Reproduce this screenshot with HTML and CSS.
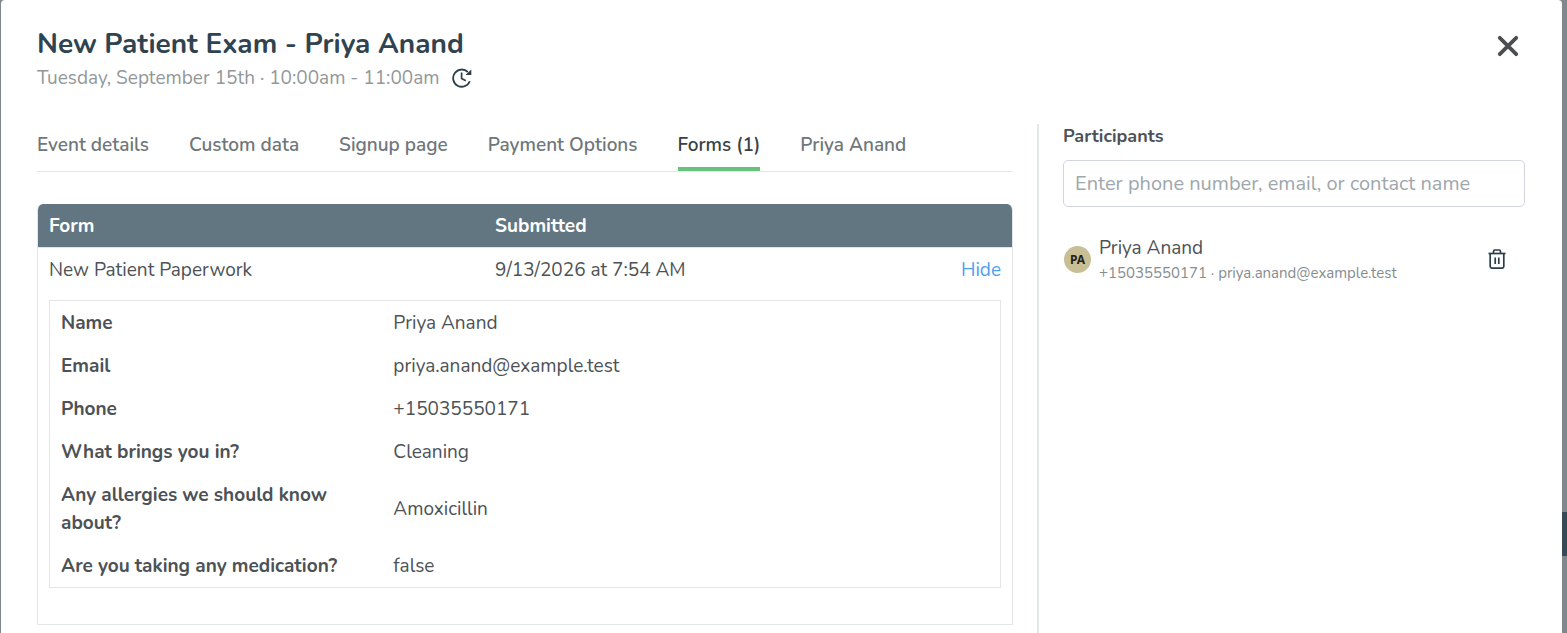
FILE: index.html
```html
<!DOCTYPE html>
<html lang="en">
<head>
  <meta charset="UTF-8">
  <meta name="viewport" content="width=device-width, initial-scale=1">
  <title>New Patient Exam - Priya Anand</title>
  <link rel="stylesheet" href="styles.css">
</head>
<body>

  <div class="page-behind"></div>

  <div class="dialog" role="dialog" aria-labelledby="dialogTitle">
    <header class="dialog-header">
      <div>
        <h1 id="dialogTitle">New Patient Exam - Priya Anand</h1>
        <div class="event-time">
          <span>Tuesday, September 15th · 10:00am - 11:00am</span>
          <button class="icon-btn" type="button" aria-label="Reschedule">
            <svg width="20" height="20" viewBox="0 0 20 20" fill="none" stroke="currentColor" stroke-width="1.8">
              <path d="M17.8 13.2A8.6 8.6 0 1 1 15.8 4"/>
              <path d="M9.6 4.6v6l4.2 2.2" stroke-width="1.7"/>
              <path d="M19.3 1.4v5.6h-5.8z" fill="currentColor" stroke="none"/>
            </svg>
          </button>
        </div>
      </div>
      <button class="icon-btn close-btn" type="button" aria-label="Close">
        <svg width="22" height="22" viewBox="0 0 22 22" fill="none" stroke="currentColor" stroke-width="3.8" stroke-linecap="round">
          <path d="M2.8 2.8l16.4 16.4M19.2 2.8L2.8 19.2"/>
        </svg>
      </button>
    </header>

    <div class="dialog-body">
      <main>
        <nav class="tabs">
          <a href="#details">Event details</a>
          <a href="#custom">Custom data</a>
          <a href="#signup">Signup page</a>
          <a href="#payment">Payment Options</a>
          <a href="#forms" class="active" aria-current="page">Forms (1)</a>
          <a href="#contact">Priya Anand</a>
        </nav>

        <div class="forms-card">
          <table class="forms">
            <thead>
              <tr>
                <th class="col-form">Form</th>
                <th>Submitted</th>
                <th class="col-action"></th>
              </tr>
            </thead>
            <tbody>
              <tr>
                <td>New Patient Paperwork</td>
                <td>9/13/2026 at 7:54 AM</td>
                <td class="action"><a href="#hide">Hide</a></td>
              </tr>
              <tr>
                <td colspan="3" class="answers-cell">
                  <table class="answers">
                    <tbody>
                      <tr><th scope="row">Name</th><td>Priya Anand</td></tr>
                      <tr><th scope="row">Email</th><td>priya.anand@example.test</td></tr>
                      <tr><th scope="row">Phone</th><td>+15035550171</td></tr>
                      <tr><th scope="row">What brings you in?</th><td>Cleaning</td></tr>
                      <tr><th scope="row">Any allergies we should know about?</th><td>Amoxicillin</td></tr>
                      <tr><th scope="row">Are you taking any medication?</th><td>false</td></tr>
                    </tbody>
                  </table>
                </td>
              </tr>
            </tbody>
          </table>
        </div>
      </main>

      <aside class="participants">
        <label for="participantSearch">Participants</label>
        <input id="participantSearch" type="text" placeholder="Enter phone number, email, or contact name">

        <div class="participant">
          <span class="avatar">PA</span>
          <div class="participant-info">
            <div class="participant-name">Priya Anand</div>
            <div class="participant-contact">+15035550171 · priya.anand@example.test</div>
          </div>
          <button class="icon-btn" type="button" aria-label="Remove participant">
            <svg width="18" height="20" viewBox="0 0 18 20" fill="none" stroke="currentColor" stroke-width="1.7" stroke-linejoin="round">
              <path d="M.5 4.5h17"/>
              <path d="M5.5 4.5V2.4Q5.5 1 6.9 1h4.2q1.4 0 1.4 1.4v2.1"/>
              <path d="M2.2 4.5v13q0 1.6 1.6 1.6h10.4q1.6 0 1.6-1.6v-13"/>
              <path d="M7.2 8.5v6.5M10.8 8.5v6.5"/>
            </svg>
          </button>
        </div>
      </aside>
    </div>
  </div>

</body>
</html>
```
FILE: styles.css
```css
* {
  box-sizing: border-box;
}

body {
  margin: 0;
  background: #81888d;
  font-family: Nunito, Lato, sans-serif;
  font-size: 19px;
  line-height: 28px;
  color: #4c5256;
}

/* strip of the app that shows past the dialog edge */
.page-behind {
  position: absolute;
  top: 512px;
  right: 0;
  width: 5px;
  height: 44px;
  background: #364b57;
}

.dialog {
  display: flex;
  flex-direction: column;
  min-height: 100vh;
  margin: 0 5px 0 1px;
  padding: 24px 37px 0 36px;
  background: #fff;
  border-radius: 4px 4px 0 0;
}

.dialog-header {
  display: flex;
  justify-content: space-between;
  align-items: flex-start;
  margin-bottom: 32px;
}

h1 {
  margin: 0;
  font-size: 28px;
  line-height: 40px;
  font-weight: 700;
  color: #2f4350;
}

.event-time {
  display: flex;
  align-items: center;
  gap: 12px;
  color: #92979a;
}

.icon-btn {
  display: flex;
  padding: 0;
  border: none;
  background: none;
  color: #2c3e4a;
  cursor: pointer;
}

.close-btn {
  margin: 11px 6px 0 0;
  color: #4a4e51;
}

.dialog-body {
  flex: 1;
  display: grid;
  grid-template-columns: minmax(0, 2fr) minmax(0, 1fr);
  gap: 24px;
}

.tabs {
  display: flex;
  gap: 40px;
  margin-bottom: 32px;
  border-bottom: 1px solid #e5e8e9;
}

.tabs a {
  padding: 7px 0 8px;
  border-bottom: 4px solid transparent;
  font-weight: 600;
  color: #6f777b;
  text-decoration: none;
}

.tabs a.active {
  color: #3a3f43;
  border-bottom-color: #67c27c;
}

.forms-card {
  padding-bottom: 36px;
  border: 1px solid #e3e7e9;
  border-top: none;
  border-radius: 6px 6px 0 0;
  overflow: hidden;
}

table {
  width: 100%;
  border-collapse: collapse;
  table-layout: fixed;
}

th,
td {
  padding: 8px 11px 7px;
  text-align: left;
}

.forms thead th {
  background: #627681;
  color: #fff;
}

.forms thead {
  border-bottom: 1px solid #e3e7e9;
}

.col-form {
  width: 446px;
}

.col-action {
  width: 10%;
}

.action {
  text-align: right;
}

.action a {
  color: #4f9fee;
  text-decoration: none;
}

.answers-cell {
  padding: 9px 11px 0;
}

.answers {
  border: 1px solid #e3e7e9;
}

.answers th {
  width: 35%;
}

.participants {
  padding-left: 24px;
  border-left: 2px solid #e5e8e9;
}

.participants label {
  display: block;
  margin-bottom: 12px;
  font-size: 18px;
  line-height: 24px;
  font-weight: 700;
}

.participants input {
  display: block;
  width: 100%;
  height: 47px;
  padding: 0 11px;
  border: 1px solid #d3d6e0;
  border-radius: 5px;
  font: inherit;
  font-size: 20px;
}

.participants input::placeholder {
  color: #9ea7ab;
}

.participant {
  display: flex;
  align-items: center;
  gap: 8px;
  margin-top: 27px;
  padding: 0 19px 0 1px;
}

.avatar {
  width: 27px;
  height: 27px;
  border-radius: 50%;
  background: #c9bf97;
  color: #26211a;
  font-family: "Noto Sans", sans-serif;
  font-size: 12px;
  line-height: 27px;
  font-weight: 700;
  text-align: center;
}

.participant-info {
  flex: 1;
}

.participant-contact {
  font-size: 15px;
  line-height: 22px;
  color: #868c90;
}
```
